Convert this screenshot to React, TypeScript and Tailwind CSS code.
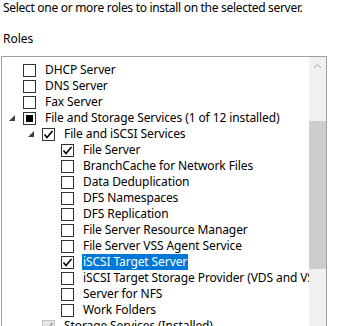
import React from "react";

type Row = {
  label: string;
  level: number;
  expand?: boolean;
  state?: "none" | "checked" | "partial" | "disabledChecked";
  selected?: boolean;
};

const rows: Row[] = [
  { label: "DHCP Server", level: 0 },
  { label: "DNS Server", level: 0 },
  { label: "Fax Server", level: 0 },
  { label: "File and Storage Services (1 of 12 installed)", level: 0, expand: true, state: "partial" },
  { label: "File and iSCSI Services", level: 1, expand: true, state: "checked" },
  { label: "File Server", level: 2, state: "checked" },
  { label: "BranchCache for Network Files", level: 2 },
  { label: "Data Deduplication", level: 2 },
  { label: "DFS Namespaces", level: 2 },
  { label: "DFS Replication", level: 2 },
  { label: "File Server Resource Manager", level: 2 },
  { label: "File Server VSS Agent Service", level: 2 },
  { label: "iSCSI Target Server", level: 2, state: "checked", selected: true },
  { label: "iSCSI Target Storage Provider (VDS and VSS hardware providers)", level: 2 },
  { label: "Server for NFS", level: 2 },
  { label: "Work Folders", level: 2 },
  { label: "Storage Services (Installed)", level: 1, state: "disabledChecked" },
];

function Check({ color }: { color: string }) {
  return (
    <svg width="13" height="13" viewBox="0 0 13 13" className="absolute -left-px -top-px">
      <path d="M2.5 6.5 L5 9.5 L10.5 3" fill="none" stroke={color} strokeWidth="1.6" />
    </svg>
  );
}

function Box({ state }: { state: Row["state"] }) {
  const disabled = state === "disabledChecked";
  return (
    <div
      className={
        "relative w-[13px] h-[13px] shrink-0 border " +
        (disabled ? "border-[#c4c4c4] bg-[#e6e6e6]" : "border-[#333333] bg-white")
      }
    >
      {state === "checked" && <Check color="#000" />}
      {disabled && <Check color="#a0a0a0" />}
      {state === "partial" && (
        <div className="absolute left-[2px] top-[2px] w-[7px] h-[7px] bg-[#000]" />
      )}
    </div>
  );
}

function Triangle() {
  return (
    <svg width="6" height="6" viewBox="0 0 6 6">
      <path d="M6 0 L6 6 L0 6 Z" fill="#404040" />
    </svg>
  );
}

const indent = ["w-0", "w-[19px]", "w-[38px]"];

export default function App() {
  return (
    <div
      className="w-[337px] h-[326px] overflow-hidden bg-white text-[12px] text-black"
      style={{ fontFamily: '"Noto Sans", "Open Sans", sans-serif' }}
    >
      <div className="h-4 leading-4 pl-[3px] whitespace-nowrap tracking-[-0.3px]">
        Select one or more roles to install on the selected server.
      </div>
      <div className="h-4 leading-4 pl-[3px] mt-[15px] whitespace-nowrap">Roles</div>
      <div className="mt-[9px] ml-px w-[326px] h-[300px] border border-[#a0a0a0] flex">
        <div className="flex-1 overflow-hidden pt-[5px] tracking-[-0.1px]">
          {rows.map((r, i) => (
            <div key={i} className="flex items-center h-4 whitespace-nowrap">
              <div className={indent[r.level] + " shrink-0"} />
              <div className="w-[21px] shrink-0 flex justify-end pr-[8px]">
                {r.expand && <Triangle />}
              </div>
              <Box state={r.state} />
              <span
                className={
                  "ml-[8px] leading-4 h-4 px-px " +
                  (r.selected ? "bg-[#0078d7] text-white" : "")
                }
              >
                {r.label}
              </span>
            </div>
          ))}
        </div>
        <div className="w-[17px] shrink-0 bg-[#f0f0f0] flex flex-col">
          <div className="h-[17px] flex items-center justify-center">
            <svg width="9" height="6" viewBox="0 0 9 6">
              <path d="M1 5 L4.5 1.5 L8 5" fill="none" stroke="#a3a3a3" strokeWidth="1" />
            </svg>
          </div>
          <div className="h-[47px]" />
          <div className="h-[148px] bg-[#cdcdcd]" />
        </div>
      </div>
    </div>
  );
}
